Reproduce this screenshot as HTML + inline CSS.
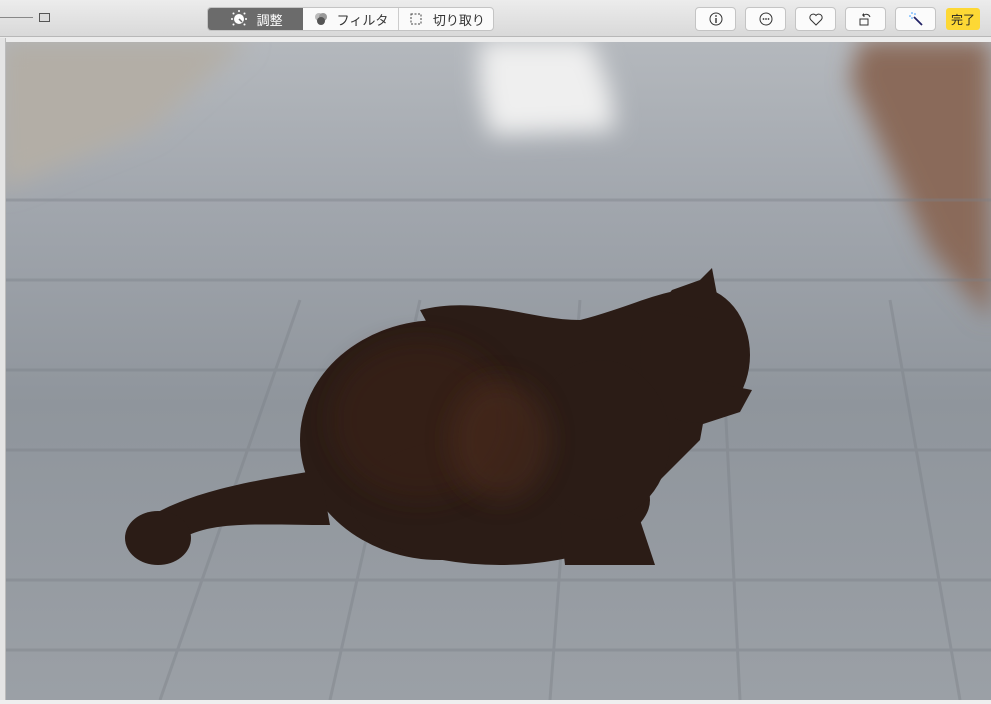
<!DOCTYPE html>
<html><head><meta charset="utf-8"><style>
*{margin:0;padding:0;box-sizing:border-box}
body{width:991px;height:704px;overflow:hidden;background:#ececec;font-family:"Liberation Sans","Noto Sans CJK JP",sans-serif;position:relative}
.tb{position:absolute;left:0;top:0;width:991px;height:37px;background:linear-gradient(#ececec,#d9d9d9);border-bottom:1px solid #b8b8b8}
.seg{position:absolute;top:7px;left:207px;height:24px;width:287px;border:1px solid #c4c4c4;border-radius:4px;background:#fafafa;display:flex;overflow:hidden}
.seg div{height:22px;font-size:13px;display:flex;align-items:center;justify-content:center;gap:8px;color:#333}
.btn{position:absolute;top:7px;height:24px;width:41px;border:1px solid #c4c4c4;border-radius:4px;background:#fbfbfb;display:flex;align-items:center;justify-content:center}
.photo{position:absolute;left:6px;top:42px;width:985px;height:658px;overflow:hidden;
background:linear-gradient(180deg,#b4b8bd 0%,#a1a6ad 25%,#8f959c 55%,#9ba0a6 100%)}
</style></head><body>
<div class="tb">
 <div style="position:absolute;left:0;top:17px;width:33px;height:1px;background:#888"></div>
 <div style="position:absolute;left:39px;top:13px;width:11px;height:9px;border:1px solid #555;background:#ddd"></div>
 <div class="seg">
  <div style="width:96px;background:#6b6b6b;color:#fff"><svg width="20" height="20" viewBox="0 0 20 20"><circle cx="10" cy="10" r="5" fill="#fff"/><path d="M10 10l3 3" stroke="#6b6b6b" stroke-width="1.5"/><g fill="#fff"><circle cx="10" cy="2" r="1"/><circle cx="3" cy="10" r="1"/><circle cx="17" cy="10" r="1"/><circle cx="4.5" cy="4.5" r="1"/><circle cx="15.5" cy="4.5" r="1"/><circle cx="4.5" cy="15.5" r="1"/><circle cx="15.5" cy="15.5" r="1"/></g></svg>調整</div>
  <div style="width:96px;border-right:1px solid #ccc"><svg width="16" height="16"><circle cx="6" cy="6" r="4" fill="#bbb"/><circle cx="10" cy="6" r="4" fill="#999"/><circle cx="8" cy="10" r="4" fill="#555"/></svg>フィルタ</div>
  <div style="width:95px"><svg width="18" height="18"><rect x="4" y="4" width="10" height="10" fill="none" stroke="#444" stroke-dasharray="2 1.5"/></svg>切り取り</div>
 </div>
 <div class="btn" style="left:695px"><svg width="14" height="14"><circle cx="7" cy="7" r="6" fill="none" stroke="#333"/><rect x="6.3" y="6" width="1.4" height="5" fill="#333"/><circle cx="7" cy="4" r="0.9" fill="#333"/></svg></div>
 <div class="btn" style="left:745px"><svg width="14" height="14"><circle cx="7" cy="7" r="6" fill="none" stroke="#333"/><circle cx="4.5" cy="7" r="0.9" fill="#333"/><circle cx="7" cy="7" r="0.9" fill="#333"/><circle cx="9.5" cy="7" r="0.9" fill="#333"/></svg></div>
 <div class="btn" style="left:795px"><svg width="14" height="13"><path d="M7 12L1.5 6.5A3 3 0 0 1 7 2.5A3 3 0 0 1 12.5 6.5Z" fill="none" stroke="#333"/></svg></div>
 <div class="btn" style="left:845px"><svg width="16" height="16"><rect x="2" y="8" width="8" height="6" fill="none" stroke="#333"/><path d="M6 6V4a4 4 0 0 1 6 2" fill="none" stroke="#333"/><path d="M4 4l2-2v4z" fill="#333"/></svg></div>
 <div class="btn" style="left:895px"><svg width="16" height="16"><path d="M6 6l8 8" stroke="#226" stroke-width="1.8"/><g fill="#39f"><circle cx="4" cy="2" r="0.8"/><circle cx="2" cy="5" r="0.8"/><circle cx="7" cy="3" r="0.8"/><circle cx="4" cy="7" r="0.8"/></g></svg></div>
 <div style="position:absolute;left:946px;top:8px;width:34px;height:22px;background:#fdd835;border-radius:3px;font-size:12px;display:flex;align-items:center;justify-content:center;color:#222">完了</div>
</div>
<div style="position:absolute;left:0;top:38px;width:6px;height:666px;background:#e4e4e4;border-right:1px solid #bbb"></div>
<div class="photo">
 <svg width="985" height="658" style="position:absolute;left:0;top:0" viewBox="6 42 985 658">
  <defs>
   <filter id="b" x="-50%" y="-50%" width="200%" height="200%"><feGaussianBlur stdDeviation="12"/></filter>
  </defs>
  <g filter="url(#b)">
   <path d="M0 40H250L150 130 0 190z" fill="#b3aea6"/>
   <path d="M860 40H991V320L930 250 850 80z" fill="#8a6a5a"/>
   <path d="M480 40H590L610 90 615 130 490 135 480 90z" fill="#efefef"/>
  </g>
  <g stroke="#7b8087" stroke-width="3" opacity="0.4" fill="none">
   <path d="M0 450H991M0 580H991M0 650H991M0 370H991M0 280H991M0 200H991"/>
   <path d="M160 700L300 300M330 700L420 300M550 700L580 300M740 700L720 300M960 700L890 300"/>
  </g>
  <g fill="#2b1c16">
   <ellipse cx="440" cy="440" rx="140" ry="120"/>
   <ellipse cx="500" cy="500" rx="150" ry="65"/>
   <path d="M420 310C480 295 530 320 580 320 620 310 650 295 680 290L720 330 700 440 620 520 480 420z"/>
   <ellipse cx="695" cy="355" rx="55" ry="68"/>
   <ellipse cx="600" cy="440" rx="70" ry="80"/>
   <path d="M655 310L672 290 700 280 712 268 718 300 712 320z"/>
   <path d="M700 380L752 390 740 412 700 425z"/>
   <path d="M130 530C180 490 260 480 320 470L330 525C260 525 210 520 180 540z"/>
   <ellipse cx="158" cy="538" rx="33" ry="27"/>
   <path d="M560 520h80l15 45h-90z"/>
  </g>
  <ellipse cx="420" cy="420" rx="90" ry="80" fill="#3c2419" opacity="0.5" filter="url(#b)"/>
  <ellipse cx="500" cy="440" rx="50" ry="60" fill="#4a2b1e" opacity="0.6" filter="url(#b)"/>
 </svg>
</div>
<div style="position:absolute;left:0;top:700px;width:991px;height:4px;background:#efefef"></div>
</body></html>
